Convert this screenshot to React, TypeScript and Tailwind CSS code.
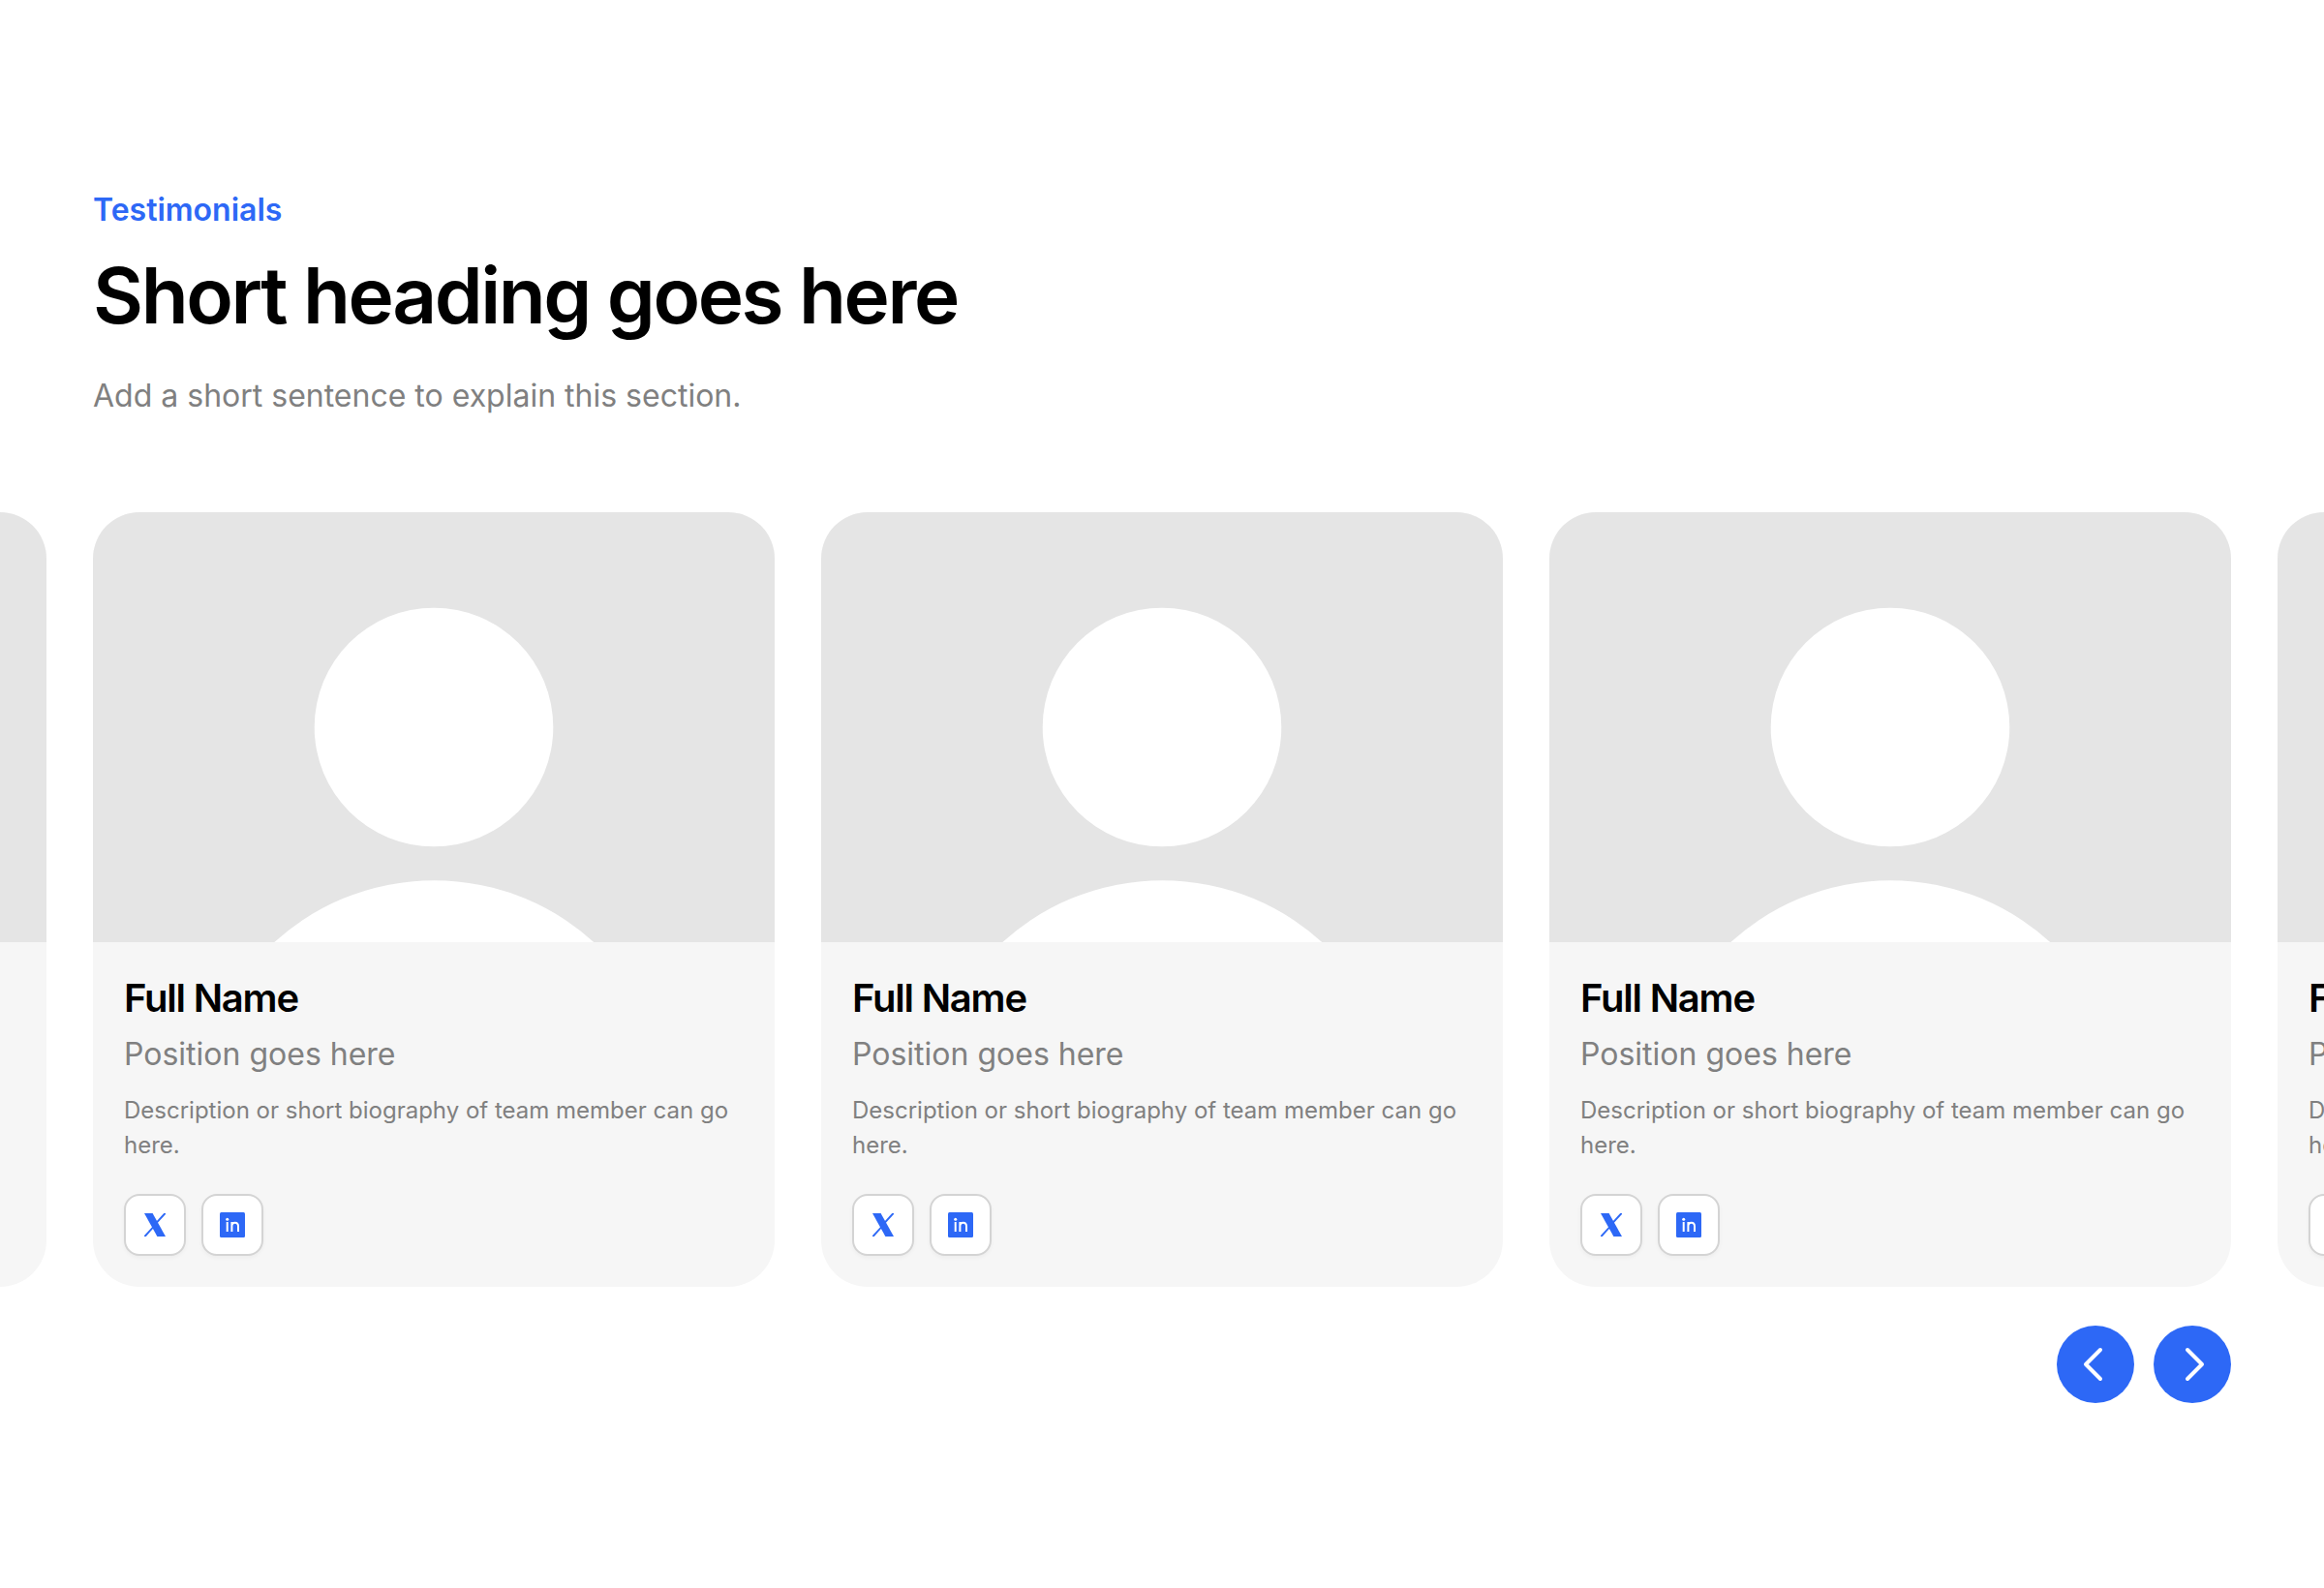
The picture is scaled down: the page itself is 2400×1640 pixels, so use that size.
import { useState } from "react";

interface Member {
  name: string;
  position: string;
  bio: string;
}

const members: Member[] = Array.from({ length: 5 }, () => ({
  name: "Full Name",
  position: "Position goes here",
  bio: "Description or short biography of team member can go here.",
}));

const XIcon = () => (
  <svg viewBox="0 0 22 24" className="w-[22px] h-6" fill="#2d68f6">
    <path d="M0 0h8.6L22 24h-8.6z" />
    <path d="M20.2 0H22v.9L13 10.8l-1-1.7z" />
    <path d="M0 24v-.9l9.2-10.2 1 1.6L1.8 24z" />
  </svg>
);

const LinkedinIcon = () => (
  <svg viewBox="0 0 26 26" className="size-[26px]" fill="none">
    <rect width="26" height="26" rx="1.5" fill="#2d68f6" />
    <circle cx="7.7" cy="7.3" r="1.5" fill="#fff" />
    <path
      d="M7.7 10V20M12.4 20V10M12.4 14.4c0-2.2 1.4-3.7 3.4-3.7s3.2 1.3 3.2 3.7V20"
      stroke="#fff"
      strokeWidth="2"
    />
  </svg>
);

const MemberCard = ({ name, position, bio }: Member) => (
  <article className="w-[704px] shrink-0 overflow-hidden rounded-[48px] bg-[#f6f6f6]">
    <svg viewBox="0 0 704 444" className="block h-[444px] w-full bg-[#e5e5e5]" fill="#fff">
      <circle cx="352" cy="222" r="123.3" />
      <circle cx="352.3" cy="625.2" r="245" />
    </svg>
    <div className="px-8 pt-8 pb-8">
      <h3 className="text-[40px] leading-[52px] font-semibold tracking-[-0.03em] text-black">
        {name}
      </h3>
      <p className="mt-2 text-[32px] leading-[48px] text-[#808080]">{position}</p>
      <p className="mt-4 text-2xl leading-9 text-[#808080]">{bio}</p>
      <div className="mt-8 flex gap-4">
        <a
          href="#"
          aria-label="X"
          className="flex size-16 items-center justify-center rounded-2xl border-2 border-[#d4d4d4] bg-white shadow-[0_2px_4px_rgba(0,0,0,0.04)]"
        >
          <XIcon />
        </a>
        <a
          href="#"
          aria-label="LinkedIn"
          className="flex size-16 items-center justify-center rounded-2xl border-2 border-[#d4d4d4] bg-white shadow-[0_2px_4px_rgba(0,0,0,0.04)]"
        >
          <LinkedinIcon />
        </a>
      </div>
    </div>
  </article>
);

const App = () => {
  const [index, setIndex] = useState(0);

  return (
    <section className="h-[1640px] w-[2400px] overflow-hidden bg-white pt-[193px] font-[Inter,sans-serif]">
      <header className="px-24">
        <p className="text-[32px] leading-[48px] font-semibold text-[#2d68f6]">Testimonials</p>
        <h2 className="mt-4 text-[80px] leading-[96px] font-semibold tracking-[-0.03em] text-black">
          Short heading goes here
        </h2>
        <p className="mt-8 text-[32px] leading-[48px] text-[#808080]">
          Add a short sentence to explain this section.
        </p>
      </header>

      <div
        className="mt-24 -ml-[656px] flex gap-12"
        style={{ transform: `translateX(${index * -752}px)` }}
      >
        {members.map((member, i) => (
          <MemberCard key={i} {...member} />
        ))}
      </div>

      <div className="mt-10 flex justify-end gap-5 px-24">
        <button
          aria-label="Previous"
          className="flex size-20 items-center justify-center rounded-full bg-[#2d68f6]"
          onClick={() => setIndex((prev) => Math.max(prev - 1, -1))}
        >
          <svg viewBox="0 0 80 80" className="size-20" fill="none" stroke="#fff" strokeWidth="4">
            <path d="M45 25 30 40l15 15" strokeLinecap="round" strokeLinejoin="round" />
          </svg>
        </button>
        <button
          aria-label="Next"
          className="flex size-20 items-center justify-center rounded-full bg-[#2d68f6]"
          onClick={() => setIndex((prev) => Math.min(prev + 1, 1))}
        >
          <svg viewBox="0 0 80 80" className="size-20" fill="none" stroke="#fff" strokeWidth="4">
            <path d="m35 25 15 15-15 15" strokeLinecap="round" strokeLinejoin="round" />
          </svg>
        </button>
      </div>
    </section>
  );
};

export default App;
